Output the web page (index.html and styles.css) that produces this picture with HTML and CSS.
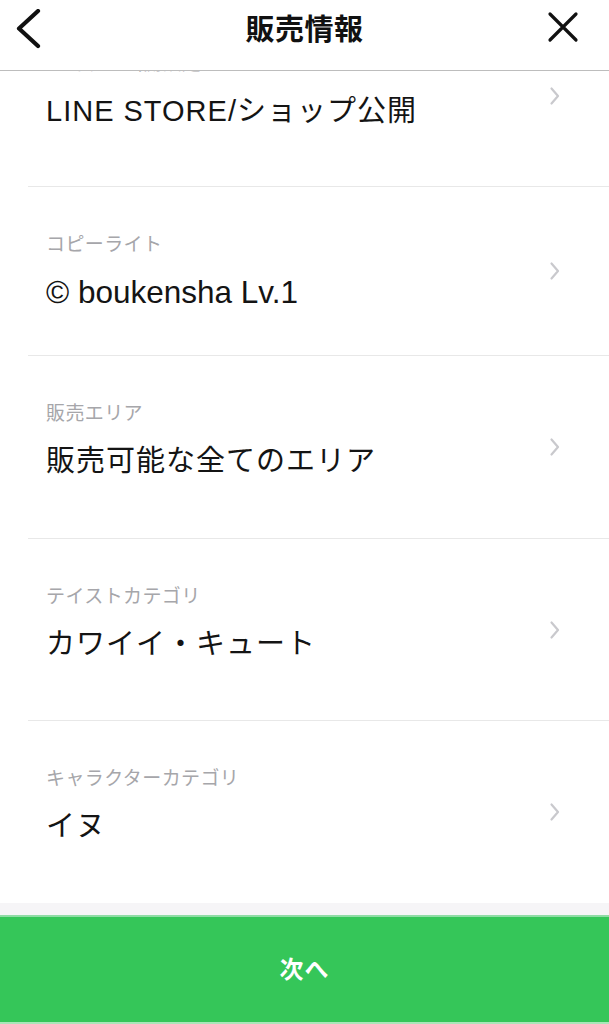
FILE: index.html
```html
<!DOCTYPE html>
<html lang="ja">
<head>
<meta charset="utf-8">
<title>販売情報</title>
<link rel="stylesheet" href="styles.css">
</head>
<body>
<header class="header">
  <button class="icon-btn back" aria-label="戻る">
    <svg width="30" height="40" viewBox="0 0 30 40"><path d="M24 2 L5 19.5 L24 37" fill="none" stroke="#111" stroke-width="4.2" stroke-linecap="round" stroke-linejoin="round"/></svg>
  </button>
  <h1 class="title">販売情報</h1>
  <button class="icon-btn close" aria-label="閉じる">
    <svg width="32" height="32" viewBox="0 0 32 32"><path d="M3 3 L29 29 M29 3 L3 29" fill="none" stroke="#111" stroke-width="3.2" stroke-linecap="round"/></svg>
  </button>
</header>

<main class="list">
  <div class="row row--first">
    <div class="row-text">
      <div class="label">ショップ公開設定</div>
      <div class="value">LINE STORE/ショップ公開</div>
    </div>
    <svg class="chev" width="12" height="20" viewBox="0 0 12 20"><path d="M2.5 2.5 L9 10 L2.5 17.5" fill="none" stroke="#c9c9cd" stroke-width="2.2" stroke-linecap="round" stroke-linejoin="round"/></svg>
  </div>
  <div class="row row--short">
    <div class="row-text">
      <div class="label">コピーライト</div>
      <div class="value latin">© boukensha Lv.1</div>
    </div>
    <svg class="chev" width="12" height="20" viewBox="0 0 12 20"><path d="M2.5 2.5 L9 10 L2.5 17.5" fill="none" stroke="#c9c9cd" stroke-width="2.2" stroke-linecap="round" stroke-linejoin="round"/></svg>
  </div>
  <div class="row row--tall">
    <div class="row-text">
      <div class="label">販売エリア</div>
      <div class="value">販売可能な全てのエリア</div>
    </div>
    <svg class="chev" width="12" height="20" viewBox="0 0 12 20"><path d="M2.5 2.5 L9 10 L2.5 17.5" fill="none" stroke="#c9c9cd" stroke-width="2.2" stroke-linecap="round" stroke-linejoin="round"/></svg>
  </div>
  <div class="row">
    <div class="row-text">
      <div class="label">テイストカテゴリ</div>
      <div class="value">カワイイ・キュート</div>
    </div>
    <svg class="chev" width="12" height="20" viewBox="0 0 12 20"><path d="M2.5 2.5 L9 10 L2.5 17.5" fill="none" stroke="#c9c9cd" stroke-width="2.2" stroke-linecap="round" stroke-linejoin="round"/></svg>
  </div>
  <div class="row row--last">
    <div class="row-text">
      <div class="label">キャラクターカテゴリ</div>
      <div class="value">イヌ</div>
    </div>
    <svg class="chev" width="12" height="20" viewBox="0 0 12 20"><path d="M2.5 2.5 L9 10 L2.5 17.5" fill="none" stroke="#c9c9cd" stroke-width="2.2" stroke-linecap="round" stroke-linejoin="round"/></svg>
  </div>
</main>

<footer class="footer">
  <button class="next-btn">次へ</button>
</footer>
</body>
</html>
```

FILE: styles.css
```css
* {
  box-sizing: border-box;
}

html, body {
  margin: 0;
  padding: 0;
}

body {
  width: 609px;
  height: 1024px;
  overflow: hidden;
  background: #ffffff;
  color: #111111;
  font-family: "Liberation Sans", "Noto Sans CJK JP", sans-serif;
  display: flex;
  flex-direction: column;
}

.header {
  position: fixed;
  top: 0;
  left: 0;
  width: 609px;
  height: 71px;
  background: #ffffff;
  border-bottom: 1px solid #bdbdbd;
  display: flex;
  align-items: center;
  justify-content: space-between;
  padding: 0 30px 13px 14px;
  z-index: 10;
}

.icon-btn {
  border: 0;
  background: none;
  padding: 0;
  margin: 0;
  display: flex;
  align-items: center;
  justify-content: center;
}

.back svg {
  display: block;
}

.close {
  margin-top: -3px;
}

.title {
  margin: 0;
  font-size: 29px;
  font-weight: 700;
  letter-spacing: 0.5px;
  color: #111111;
  position: absolute;
  left: 0;
  right: 0;
  top: 11px;
  text-align: center;
  line-height: 38px;
  pointer-events: none;
}

.list {
  padding-top: 6px;
  padding-left: 28px;
  flex: 0 0 auto;
}

.row {
  height: 182px;
  border-bottom: 1px solid #e8e8e8;
  display: flex;
  align-items: center;
  justify-content: space-between;
  padding: 0 48px 0 18px;
}

.row--first {
  height: 181px;
}

.row--short {
  height: 169px;
}

.row--tall {
  height: 183px;
}

.row--last {
  border-bottom: 0;
}

.row-text {
  align-self: flex-start;
  padding-top: 46px;
  display: flex;
  flex-direction: column;
}

.label {
  font-size: 19px;
  line-height: 24px;
  color: #a6a6aa;
  margin-bottom: 15px;
  letter-spacing: 0.4px;
}

.value {
  font-size: 29px;
  line-height: 40px;
  color: #141414;
  letter-spacing: 1px;
}

.value.latin {
  font-size: 31.5px;
  letter-spacing: 0;
}

.chev {
  display: block;
  margin-top: 0;
}

.footer {
  flex: 0 0 auto;
  background: #f6f5f7;
  padding-top: 12px;
  border-bottom: 2px solid #a9e6b9;
}

.next-btn {
  display: flex;
  align-items: center;
  justify-content: center;
  width: 100%;
  height: 107px;
  margin: 0;
  border: 0;
  border-top: 2px solid #8fdca5;
  background: #35c659;
  color: #ffffff;
  font-family: "Liberation Sans", "Noto Sans CJK JP", sans-serif;
  font-size: 24px;
  font-weight: 700;
  letter-spacing: 1px;
  padding: 0 0 4px 0;
}
```
